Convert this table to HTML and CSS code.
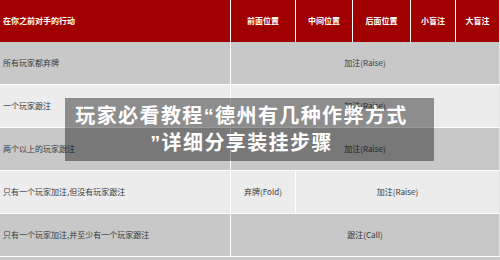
FILE: index.html
```html
<!DOCTYPE html>
<html lang="zh">
<head>
<meta charset="utf-8">
<link rel="stylesheet" href="styles.css">
</head>
<body>
<div class="page">
  <table class="strategy">
    <colgroup>
      <col class="c1"><col class="c2"><col class="c3"><col class="c4"><col class="c5"><col class="c6">
    </colgroup>
    <thead>
      <tr class="head">
        <th class="first">在你之前对手的行动</th>
        <th>前面位置</th>
        <th>中间位置</th>
        <th>后面位置</th>
        <th>小盲注</th>
        <th class="last">大盲注</th>
      </tr>
    </thead>
    <tbody>
      <tr class="dark">
        <td class="first">所有玩家都弃牌</td>
        <td colspan="5" class="last">加注(Raise)</td>
      </tr>
      <tr class="light">
        <td class="first">一个玩家跟注</td>
        <td colspan="5" class="last">加注(Raise)</td>
      </tr>
      <tr class="dark">
        <td class="first">两个以上的玩家跟注</td>
        <td colspan="5" class="last">加注(Raise)</td>
      </tr>
      <tr class="light">
        <td class="first">只有一个玩家加注,但没有玩家跟注</td>
        <td>弃牌(Fold)</td>
        <td colspan="4" class="last">加注(Raise)</td>
      </tr>
      <tr class="dark">
        <td class="first">只有一个玩家加注,并至少有一个玩家跟注</td>
        <td colspan="5" class="last">跟注(Call)</td>
      </tr>
    </tbody>
  </table>
  <div class="overlay">玩家必看教程“德州有几种作弊方式<br>”详细分享装挂步骤</div>
</div>
</body>
</html>
```
FILE: styles.css
```css
html, body {
  margin: 0;
  padding: 0;
  background: #c8c8c8;
}
.page {
  position: relative;
  width: 500px;
  height: 260px;
  overflow: hidden;
  font-family: "Noto Sans CJK SC", "Liberation Sans", sans-serif;
}
.strategy {
  width: 500px;
  table-layout: fixed;
  border-collapse: separate;
  border-spacing: 0;
}
.c1 { width: 231px; }
.c2 { width: 65px; }
.c3 { width: 57px; }
.c4 { width: 58px; }
.c5 { width: 45px; }
.c6 { width: 44px; }
.strategy th, .strategy td {
  padding: 0;
  text-align: center;
  vertical-align: middle;
  font-size: 8px;
  line-height: 10px;
  white-space: nowrap;
  overflow: hidden;
  border-right: 1px solid #fff;
}
.strategy th {
  height: 42px;
  background: #a00000;
  color: #fff;
  font-weight: bold;
}
.strategy td {
  height: 42px;
  color: #3a3a3a;
  border-bottom: 1px solid #fff;
}
.strategy .first {
  text-align: left;
  padding-left: 3px;
}
.strategy .last {
  border-right-color: #e4e4e4;
}
.dark td { background: #c8c8c8; }
.light td { background: #ececec; }
.overlay {
  position: absolute;
  left: 65px;
  top: 98px;
  width: 369px;
  height: 63px;
  box-sizing: border-box;
  padding: 5px 26px 0 10px;
  background: rgba(0, 0, 0, 0.4);
  color: #fff;
  font-family: "Liberation Sans", "Noto Sans CJK SC", sans-serif;
  font-weight: bold;
  font-size: 20px;
  line-height: 27px;
  letter-spacing: 1.4px;
  text-align: center;
  white-space: nowrap;
}
```
